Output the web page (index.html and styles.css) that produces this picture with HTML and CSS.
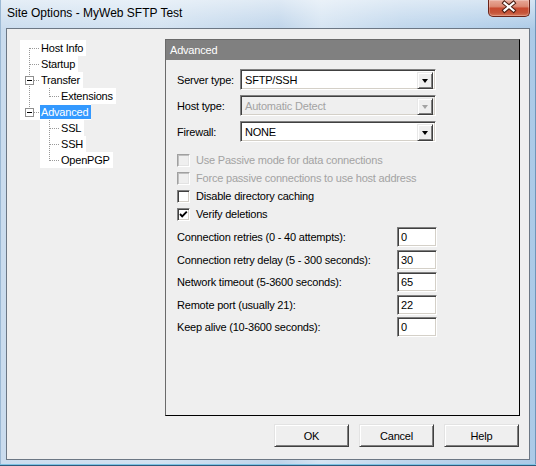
FILE: index.html
```html
<!DOCTYPE html>
<html>
<head>
<meta charset="utf-8">
<title>Site Options</title>
<link rel="stylesheet" href="styles.css">
</head>
<body>
<div class="window">
  <div class="titlebar">
    <span class="title">Site Options - MyWeb SFTP Test</span>
    <div class="close">
      <svg width="42" height="17" viewBox="0 0 42 17">
        <path d="M16.5 4 L25.5 11.5 M25.5 4 L16.5 11.5" stroke="#4a1d12" stroke-width="4.2" stroke-linecap="square" fill="none"/>
        <path d="M16.5 4 L25.5 11.5 M25.5 4 L16.5 11.5" stroke="#ffffff" stroke-width="2.2" stroke-linecap="square" fill="none"/>
      </svg>
    </div>
  </div>
  <div class="client">
    <div class="main">
      <div class="tree">
        <div class="node"><span class="cell c-first"></span><span class="label">Host Info</span></div>
        <div class="node"><span class="cell c-tee"></span><span class="label">Startup</span></div>
        <div class="node"><span class="cell c-tee"><span class="toggle"></span></span><span class="label">Transfer</span></div>
        <div class="node"><span class="cell c-pipe"></span><span class="cell c-ell"></span><span class="label">Extensions</span></div>
        <div class="node"><span class="cell c-ell"><span class="toggle"></span></span><span class="label selected">Advanced</span></div>
        <div class="node"><span class="cell"></span><span class="cell c-tee"></span><span class="label">SSL</span></div>
        <div class="node"><span class="cell"></span><span class="cell c-tee"></span><span class="label">SSH</span></div>
        <div class="node"><span class="cell"></span><span class="cell c-ell"></span><span class="label">OpenPGP</span></div>
      </div>
      <section class="panel">
        <div class="panel-head">Advanced</div>
        <div class="panel-body">
          <div class="combos">
            <div class="combo-row">
              <span class="field-label">Server type:</span>
              <div class="combo"><span class="combo-value">SFTP/SSH</span><span class="combo-btn"><span class="arrow"></span></span></div>
            </div>
            <div class="combo-row">
              <span class="field-label">Host type:</span>
              <div class="combo disabled"><span class="combo-value">Automatic Detect</span><span class="combo-btn"><span class="arrow"></span></span></div>
            </div>
            <div class="combo-row">
              <span class="field-label">Firewall:</span>
              <div class="combo"><span class="combo-value">NONE</span><span class="combo-btn"><span class="arrow"></span></span></div>
            </div>
          </div>
          <div class="checks">
            <div class="check-row disabled"><span class="box"></span><span class="check-text">Use Passive mode for data connections</span></div>
            <div class="check-row disabled"><span class="box"></span><span class="check-text">Force passive connections to use host address</span></div>
            <div class="check-row"><span class="box"></span><span class="check-text">Disable directory caching</span></div>
            <div class="check-row"><span class="box"><svg width="11" height="11" viewBox="0 0 11 11"><path d="M2 5 L4.2 7.3 L8.8 2.6" stroke="#000" stroke-width="1.9" fill="none"/></svg></span><span class="check-text">Verify deletions</span></div>
          </div>
          <div class="numbers">
            <div class="num-row"><span class="num-label">Connection retries (0 - 40 attempts):</span><span class="num-input">0</span></div>
            <div class="num-row"><span class="num-label">Connection retry delay (5 - 300 seconds):</span><span class="num-input">30</span></div>
            <div class="num-row"><span class="num-label">Network timeout (5-3600 seconds):</span><span class="num-input">65</span></div>
            <div class="num-row"><span class="num-label">Remote port (usually 21):</span><span class="num-input">22</span></div>
            <div class="num-row"><span class="num-label">Keep alive (10-3600 seconds):</span><span class="num-input">0</span></div>
          </div>
        </div>
      </section>
    </div>
    <div class="buttons">
      <button class="btn">OK</button>
      <button class="btn">Cancel</button>
      <button class="btn">Help</button>
    </div>
  </div>
</div>
</body>
</html>
```
FILE: styles.css
```css
html, body {
  margin: 0;
  padding: 0;
}
body {
  width: 536px;
  height: 466px;
  overflow: hidden;
  font-family: "Liberation Sans", Arial, sans-serif;
  font-size: 11px;
  letter-spacing: -0.2px;
  color: #000;
}
.window {
  width: 536px;
  height: 466px;
  box-sizing: border-box;
  padding: 0 6px 6px;
  display: flex;
  flex-direction: column;
  background:
    linear-gradient(to bottom, rgba(255,255,255,0.5), rgba(255,255,255,0) 30px),
    linear-gradient(to right, #cadcee 0, #d2e2f1 30%, #bed4ea 52%, #d5e4f2 60%, #bfd6ec 75%, #abcae7 100%);
  box-shadow: inset 0 -1px #2e5a7c, inset 0 -2px #7fc3e4, inset 1px 0 #9cb9d4, inset -1px 0 #6f95b8;
}
.titlebar {
  height: 28px;
  flex: none;
  display: flex;
  justify-content: space-between;
  align-items: flex-start;
}
.title {
  padding: 6px 0 0 1px;
  font-size: 12px;
  letter-spacing: 0;
  line-height: 15px;
  color: #000;
}
.close {
  width: 42px;
  height: 17px;
  box-sizing: border-box;
  border: 1px solid #6b2419;
  border-top: none;
  border-radius: 0 0 5px 5px;
  background: linear-gradient(to bottom, #e8a898 0, #dc8a74 40%, #c84a30 52%, #c5553a 80%, #d87a5c 100%);
  box-shadow: inset 0 0 0 1px rgba(255,255,255,0.25);
  overflow: hidden;
}
.close svg {
  display: block;
  margin: -1px 0 0 -1px;
}
.client {
  flex: 1;
  border: 1px solid #6c7784;
  background: #efefef;
  padding: 10px 0 0 13px;
  display: flex;
  flex-direction: column;
}
.main {
  display: flex;
  align-items: flex-start;
}
.tree {
  width: 145px;
  margin-top: 1px;
  display: flex;
  flex-direction: column;
}
.node {
  display: flex;
  height: 16px;
}
.cell {
  width: 20px;
  height: 16px;
  box-sizing: border-box;
  padding-left: 5px;
  display: flex;
  align-items: center;
  flex: none;
}
.c-first, .c-tee, .c-pipe, .c-ell {
  background-color: #fff;
  background-repeat: no-repeat;
}
.c-first {
  background-image:
    repeating-linear-gradient(to right, #999 0 1px, transparent 1px 2px),
    repeating-linear-gradient(to bottom, #999 0 1px, transparent 1px 2px);
  background-position: 10px 8px, 9px 8px;
  background-size: 10px 1px, 1px 8px;
}
.c-tee {
  background-image:
    repeating-linear-gradient(to right, #999 0 1px, transparent 1px 2px),
    repeating-linear-gradient(to bottom, #999 0 1px, transparent 1px 2px);
  background-position: 10px 8px, 9px 0;
  background-size: 10px 1px, 1px 16px;
}
.c-pipe {
  background-image:
    repeating-linear-gradient(to bottom, #999 0 1px, transparent 1px 2px);
  background-position: 9px 0;
  background-size: 1px 16px;
}
.c-ell {
  background-image:
    repeating-linear-gradient(to right, #999 0 1px, transparent 1px 2px),
    repeating-linear-gradient(to bottom, #999 0 1px, transparent 1px 2px);
  background-position: 10px 8px, 9px 0;
  background-size: 10px 1px, 1px 9px;
}
.toggle {
  width: 9px;
  height: 9px;
  box-sizing: border-box;
  border: 1px solid #8f8f8f;
  background: #fff linear-gradient(#000, #000) no-repeat center / 5px 1px;
}
.label {
  background: #fff;
  line-height: 16px;
  height: 16px;
  padding: 0 3px 0 1px;
  white-space: nowrap;
}
.label.selected {
  background: #3399ff;
  color: #fff;
  box-shadow: inset 0 1px #fff, inset 0 -1px #fff;
}
.panel {
  width: 355px;
  height: 377px;
  box-sizing: border-box;
  border: 1px solid;
  border-color: #6a6a6a #000 #000 #6a6a6a;
  display: flex;
  flex-direction: column;
}
.panel-head {
  height: 20px;
  line-height: 20px;
  background: #808080;
  color: #fff;
  padding-left: 4px;
}
.panel-body {
  padding: 9px 0 0 11px;
  display: flex;
  flex-direction: column;
}
.combos {
  display: flex;
  flex-direction: column;
  gap: 5px;
}
.combo-row {
  display: flex;
  align-items: center;
  height: 21px;
}
.field-label {
  width: 63px;
  flex: none;
}
.combo {
  width: 196px;
  height: 21px;
  box-sizing: border-box;
  border: 1px solid;
  border-color: #808080 #fff #fff #808080;
  box-shadow: inset 1px 1px #404040, inset -1px -1px #d4d0c8;
  background: #fff;
  display: flex;
  padding: 2px;
}
.combo-value {
  flex: 1;
  line-height: 17px;
  padding-left: 2px;
}
.combo-btn {
  width: 16px;
  height: 17px;
  box-sizing: border-box;
  border: 1px solid;
  border-color: #e8e8e8 #404040 #404040 #e8e8e8;
  box-shadow: inset 1px 1px #fff, inset -1px -1px #808080;
  background: #efefef;
  display: flex;
  align-items: center;
  justify-content: center;
}
.arrow {
  width: 0;
  height: 0;
  border-left: 3.5px solid transparent;
  border-right: 3.5px solid transparent;
  border-top: 4px solid #000;
  margin-top: 1px;
}
.combo.disabled {
  background: #efefef;
}
.combo.disabled .combo-value {
  color: #a3a3a3;
}
.combo.disabled .arrow {
  border-top-color: #a3a3a3;
}
.field-label, .combo-value, .check-text, .num-label, .num-input {
  white-space: nowrap;
}
.checks {
  margin-top: 9px;
  display: flex;
  flex-direction: column;
}
.check-row {
  height: 18px;
  display: flex;
  align-items: center;
}
.box {
  width: 13px;
  height: 13px;
  box-sizing: border-box;
  border: 1px solid;
  border-color: #808080 #fff #fff #808080;
  box-shadow: inset 1px 1px #404040, inset -1px -1px #d4d0c8;
  background: #fff;
  flex: none;
}
.box svg {
  display: block;
}
.check-text {
  margin-left: 6px;
}
.check-row.disabled .box {
  background: #efefef;
  border-color: #a0a0a0 #fff #fff #a0a0a0;
  box-shadow: inset 1px 1px #c0c0c0, inset -1px -1px #e3e3e3;
}
.check-row.disabled .check-text {
  color: #a3a3a3;
}
.numbers {
  margin-top: 4px;
  display: flex;
  flex-direction: column;
  gap: 2.5px;
}
.num-row {
  display: flex;
  align-items: center;
  height: 20px;
}
.num-label {
  width: 220px;
  flex: none;
}
.num-input {
  width: 40px;
  height: 20px;
  box-sizing: border-box;
  border: 1px solid;
  border-color: #808080 #fff #fff #808080;
  box-shadow: inset 1px 1px #404040, inset -1px -1px #d4d0c8;
  background: #fff;
  padding-left: 3px;
  line-height: 18px;
}
.buttons {
  margin-top: 8px;
  padding-right: 10px;
  display: flex;
  justify-content: flex-end;
  gap: 10px;
}
.btn {
  width: 75px;
  height: 23px;
  box-sizing: border-box;
  margin: 0;
  padding: 0;
  font-family: "Liberation Sans", Arial, sans-serif;
  font-size: 11px;
  letter-spacing: -0.2px;
  color: #000;
  border: 1px solid;
  border-color: #e3e3e3 #404040 #404040 #e3e3e3;
  box-shadow: inset 1px 1px #fff, inset -1px -1px #808080;
  background: #efefef;
  text-align: center;
  line-height: 20px;
}
```
